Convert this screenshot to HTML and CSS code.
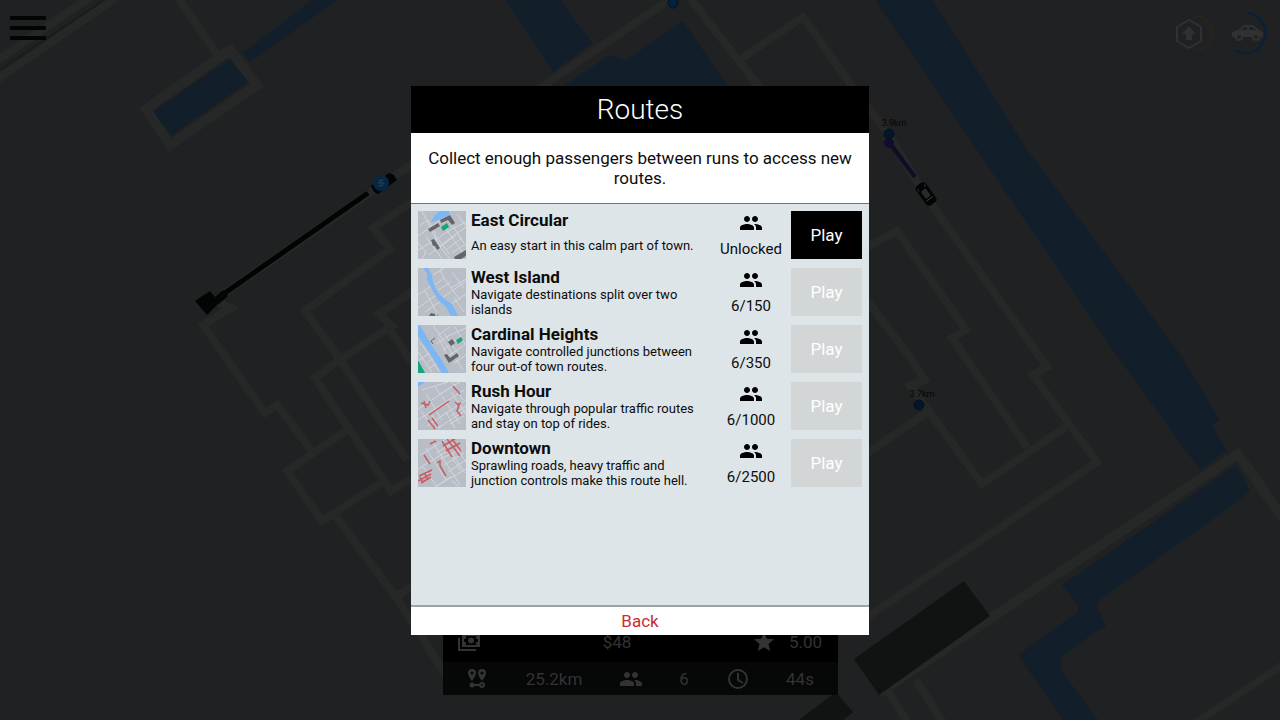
FILE: index.html
```html
<!doctype html>
<html lang="en">
<head>
<meta charset="utf-8">
<meta name="viewport" content="width=device-width, initial-scale=1.0">
<link rel="stylesheet" href="styles.css">
<title>Routes</title>
</head>
<body>

<!-- shared symbols -->
<svg class="defs" aria-hidden="true">
  <symbol id="people" viewBox="0 0 24 24">
    <path d="M16 11c1.66 0 2.99-1.34 2.99-3S17.66 5 16 5s-3 1.34-3 3 1.34 3 3 3zm-8 0c1.66 0 2.99-1.34 2.99-3S9.66 5 8 5 5 6.340 5 8s1.340 3 3 3zm0 2c-2.330 0-7 1.170-7 3.500V19h14v-2.500c0-2.330-4.670-3.500-7-3.500zm8 0c-.29 0-.62.02-.97.05 1.160.84 1.970 1.970 1.970 3.450V19h6v-2.500c0-2.330-4.670-3.500-7-3.500z"/>
  </symbol>
</svg>

<svg class="map" viewBox="0 0 1280 720" preserveAspectRatio="xMidYMid slice" aria-hidden="true">
  <g class="water">
    <path d="M243 53L312 0h25L250 62z"/>
    <path d="M152 112L230 59l18 23-76 53z"/>
    <path d="M506 0h54l32 43-39 29z"/>
    <path d="M560 88l50-33 15 6 58-40 46 67z"/>
    <path d="M875 0h58l92 147 115 153 44 60 36 60-8 6 15 24-27 20-80-110z"/>
    <path d="M1236 465l14 26-10 9-140 100-3 6 9 21-11 5-33 25-2 12 38 51h-35l-45-65 60-43v-7l-16-20z"/>
  </g>
  <g class="roads">
    <path d="M-5 62L92-4M-5 81L120-5"/>
    <path d="M178-2l39 56"/>
    <path class="wide" d="M146 109L230 50l27 35-87 60z"/>
    <path d="M222 295L415 162M213 300l18 8-28 17 62 88 12-8 35 46"/>
    <path d="M415 200l-42 28 17 21-85 62 37 51 65 98M415 290l-36 24 13 12-50 32-27 20 76 113 20-12M388 327l27 40"/>
    <path d="M350 428l-63 43 35 50 63-41M335 515l63 85 48 75M395 597l20-12"/>
    <path d="M540 88L672-2M690-2l70 90M742 58l61-41 48 68 38 50 36 60 117 165 5 7-14 8 64 87-234 158"/>
    <path d="M862 250l35-19 69 99-14 8 75 109M862 294l50 66 13 20-15 6 19 25 53 73 84-57M929 411l-70 48"/>
    <path class="wide" d="M1284 520l-46-66-358 238"/>
    <path d="M887 690l22 34M916 680l28 44M1284 664l-90 60"/>
  </g>
  <path class="rail" d="M-2 71L104 0"/>
  <g class="blocks">
    <path d="M854 659l110-78 26 35-111 79z"/>
    <path d="M836 692l17 20-12 10h-45z"/>
  </g>
  <g class="trip">
    <path class="leg" d="M222 295L368 193"/>
    <path d="M195 301l15-10 5 6 8-7 5 6-8 7-3 2-1 1-9 9z"/>
    <path class="cab" d="M371 186l18-13 5 2 3 5-19 14-4-2z"/>
    <circle class="badge" cx="381" cy="183" r="8"/>
    <path class="mark" d="M378 183h6M379 181l4-1M379 186l4-1"/>
  </g>
  <g class="trip">
    <path class="leg next" d="M889 142l26 35"/>
    <circle class="goal" cx="889" cy="143" r="5"/>
    <circle class="stop" cx="889" cy="134" r="5"/>
    <g transform="translate(926 194) rotate(54)">
      <rect x="-12" y="-6" width="24" height="12" rx="4"/>
      <rect class="roof" x="-5" y="-3" width="9" height="6" rx="1"/>
      <path class="glass" d="M-9-4h3M-9 4h3M6-4v8"/>
    </g>
  </g>
  <circle class="stop" cx="919" cy="405" r="5"/>
  <circle class="stop bright" cx="673" cy="3" r="5"/>
  <text class="distance" x="894" y="126">3.9km</text>
  <text class="distance" x="922" y="397">3.7km</text>
</svg>

<header class="topbar">
  <button class="menu" type="button" aria-label="Menu"><span></span><span></span><span></span></button>
  <div class="gauges">
    <svg width="44" height="44" viewBox="0 0 44 44" aria-hidden="true">
      <path class="ring gold" d="M25 6a17 17 0 0 1 0 34"/>
      <path class="hex" d="M19 10l12 7v14l-12 7-12-7V17z"/>
      <path class="solid" d="M19 16l7 8h-4v6h-6v-6h-4z"/>
    </svg>
    <svg width="44" height="44" viewBox="0 0 44 44" aria-hidden="true">
      <path class="ring blue" d="M21 3a20 20 0 1 1-12 37"/>
      <path class="solid" d="M6 22l6-2 5-5h10l6 5 4 2v5h-3a4 4 0 0 1-8 0h-9a4 4 0 0 1-8 0H6z"/>
      <path class="window" d="M15 20l3-3h3v3zM23 17h3l4 3h-7z"/>
      <circle class="window" cx="13" cy="27" r="2"/><circle class="window" cx="30" cy="27" r="2"/>
    </svg>
  </div>
</header>

<section class="hud" aria-label="Run statistics">
  <div class="hud-row cash">
    <svg width="24" height="24" viewBox="0 0 24 24" aria-hidden="true">
      <path class="outline" d="M6 5h16v11H6zM2 8v12h17M6 8h2V5M20 5v3h2M6 13h2v3M20 16v-3h2"/>
      <circle cx="14" cy="10.500" r="3"/>
    </svg>
    <span>$48</span>
    <svg width="24" height="24" viewBox="0 0 24 24" aria-hidden="true">
      <path d="M12 17.270L18.180 21l-1.640-7.030L22 9.240l-7.190-.61L12 2 9.190 8.630 2 9.240l5.460 4.730L5.820 21z"/>
    </svg>
    <span>5.00</span>
  </div>
  <div class="hud-row totals">
    <svg width="24" height="24" viewBox="0 0 24 24" aria-hidden="true">
      <path fill-rule="evenodd" d="M7 2a4 4 0 0 0-4 4c0 3 4 8 4 8s4-5 4-8a4 4 0 0 0-4-4zm0 2.500a1.500 1.500 0 1 1 0 3 1.500 1.500 0 0 1 0-3zM17 2a4 4 0 0 0-4 4c0 3 4 8 4 8s4-5 4-8a4 4 0 0 0-4-4zm0 2.500a1.500 1.500 0 1 1 0 3 1.500 1.500 0 0 1 0-3z"/>
      <path class="outline" d="M7 18h8"/><circle cx="7" cy="18" r="2.500"/><circle class="outline" cx="17" cy="18" r="2"/>
    </svg>
    <span>25.2km</span>
    <svg width="24" height="24" aria-hidden="true"><use href="#people"/></svg>
    <span>6</span>
    <svg width="24" height="24" viewBox="0 0 24 24" aria-hidden="true">
      <circle class="outline" cx="12" cy="12" r="9"/><path class="outline" d="M12 6v7l5 3"/>
    </svg>
    <span>44s</span>
  </div>
</section>

<main class="overlay">
  <div class="dialog" role="dialog" aria-labelledby="dialog-title">
    <h1 id="dialog-title">Routes</h1>
    <p class="intro">Collect enough passengers between runs to access new routes.</p>

    <ul class="routes">
      <li class="route">
        <svg class="thumb" viewBox="0 0 48 48" aria-hidden="true">
          <path class="street" d="M0 25l20-14 10-3 18 27M4 0l18 36 10 12M0 39l14-8 20-13 14-7M11 44l20-16 17-12M8 26l16 22M17 24l15 20M28 18l17 24M2 14l8-5 8 14M22 36l16-12M29 38l15-11M34 42l12-8M0 32l8 9-4 7M39 3l9 12"/>
          <path class="river" d="M13 11L17 4l5-4h9v4l-11 5z"/>
          <path class="house" d="M10 18l10-6 2 3-10 6zM22 9l10-5 5 8-3 2-4-5-7 3zM13 29l3-1 6 9-3 2-2-4-2 0zM36 46l12-7v6l-5 3h-6z"/>
          <path class="park" d="M23 16l6-4 2 4-6 4z"/>
        </svg>
        <div class="about"><h2>East Circular</h2><p>An easy start in this calm part of town.</p></div>
        <div class="need"><svg width="24" height="24" aria-hidden="true"><use href="#people"/></svg><span>Unlocked</span></div>
        <button class="play" type="button">Play</button>
      </li>
      <li class="route">
        <svg class="thumb" viewBox="0 0 48 48" aria-hidden="true">
          <path class="street" d="M0 27l13-9M17 17l9-7 7 10 15-9M26 10l-4-8 4-2M20 22l13-8M33 20l9 12M24 30l24-17M0 40l18-13 5 6-16 11M7 23l12 22M34 4l12 16M15 7l11-7M30 38l18-12M36 30l10 14"/>
          <path class="river" d="M5 0h5l4 7 1 7 5 11 8 7 6 4 6 12h-7l-5-9-8-7-5-9-6-11V5z"/>
          <path class="house" d="M11 48l2-3 4 1v2z"/><path class="park" d="M18 48l2-1v1z"/>
        </svg>
        <div class="about"><h2>West Island</h2><p>Navigate destinations split over two islands</p></div>
        <div class="need"><svg width="24" height="24" aria-hidden="true"><use href="#people"/></svg><span>6/150</span></div>
        <button class="play" type="button" disabled>Play</button>
      </li>
      <li class="route">
        <svg class="thumb" viewBox="0 0 48 48" aria-hidden="true">
          <path class="street" d="M15 0l30 45M3 18l18 28M0 27l14 20M7 31l10-6M10 37l11-7M12 43l12-8M20 10l12-8M18 19l12-8 18-8M25 25l16-12M30 31l18-12M36 38l12-8M26 8l16 24M20 12l9 17M37 2l10 17M0 36l8-5"/>
          <path class="river" d="M0 0l3 2 11 19 9 13 8 14h-7L11 27 0 11z"/>
          <path class="house" d="M30 17l4-3 3 4-4 3zM26 30l3-1 3 4 7-5 2 3-10 7z"/>
          <path class="smudge" d="M13 16l2 3M13 16l4-3"/>
          <path class="park" d="M38 15l5-3 2 3-5 4zM0 35l7 13H0z"/>
        </svg>
        <div class="about"><h2>Cardinal Heights</h2><p>Navigate controlled junctions between four out-of town routes.</p></div>
        <div class="need"><svg width="24" height="24" aria-hidden="true"><use href="#people"/></svg><span>6/350</span></div>
        <button class="play" type="button" disabled>Play</button>
      </li>
      <li class="route">
        <svg class="thumb" viewBox="0 0 48 48" aria-hidden="true">
          <path class="street" d="M0 27l38-25M0 38l46-30M9 44l39-26M20 46l28-18M8 12l16 26M4 8l26-8M17 5l5 7 20-12M24 14l18 28M33 10l15 22M3 29l12 17M14 33l8 13M28 30l9 16M33 34l15-10M34 0l11 18M32 42l14-8"/>
          <path class="river" d="M0 0h7L0 5z"/>
          <path class="jam" d="M11 33l20-14M3 21l7 2 2-4M6 19l2 7M35 4l7 8M37 20l4 3-2 6 4 5M39 23l4-2M10 38l7 9M14 36l6 8"/>
        </svg>
        <div class="about"><h2>Rush Hour</h2><p>Navigate through popular traffic routes and stay on top of rides.</p></div>
        <div class="need"><svg width="24" height="24" aria-hidden="true"><use href="#people"/></svg><span>6/1000</span></div>
        <button class="play" type="button" disabled>Play</button>
      </li>
      <li class="route">
        <svg class="thumb" viewBox="0 0 48 48" aria-hidden="true">
          <path class="street" d="M2 16l26-16M0 30l36-22M14 2l28 44M8 9l20 32M18 14l17-10M5 28l14 20M22 20l22-10M26 26l20-12M30 33l18-12M20 46l28-16M34 14l13 20M40 12l8 11M17 48l16-10M27 8l16 24M34 42l6 5"/>
          <path class="jam" d="M12 5l6-3M24 2l10 16M29 0l13 17M34 0l9 12M25 7l12-7M28 12l14-8M6 16l6 9M19 24l3-2 0 5 6 10M1 37l13-6M0 42l13-7M3 44l10-6M2 38l3 6M7 35l3 6"/>
        </svg>
        <div class="about"><h2>Downtown</h2><p>Sprawling roads, heavy traffic and junction controls make this route hell.</p></div>
        <div class="need"><svg width="24" height="24" aria-hidden="true"><use href="#people"/></svg><span>6/2500</span></div>
        <button class="play" type="button" disabled>Play</button>
      </li>
    </ul>

    <button class="back" type="button">Back</button>
  </div>
</main>

</body>
</html>
```
FILE: styles.css
```css
* {
	box-sizing: border-box;
}
html,
body {
	height: 100%;
}
body {
	margin: 0;
	overflow: hidden;
	font-family: Roboto, "Liberation Sans", sans-serif;
	font-size: 15px;
	color: #0c0d0d;
	background-color: #202122;
}
h1,
h2,
p,
ul {
	margin: 0;
	padding: 0;
}
svg {
	display: block;
	flex: none;
}
button {
	border: 0;
	padding: 0;
	font: inherit;
	cursor: pointer;
}
.defs {
	position: absolute;
	width: 0;
	height: 0;
}

/* map behind everything */
.map {
	position: absolute;
	width: 100%;
	height: 100%;
}
.water {
	fill: #121e29;
}
.roads {
	fill: none;
	stroke: #262827;
	stroke-width: 8;
}
.roads .wide {
	stroke-width: 10;
}
.rail {
	stroke: #1b1c1c;
	stroke-width: 2;
}
.blocks {
	fill: #111312;
}
.trip {
	fill: #030404;
}
.leg {
	stroke: #020303;
	stroke-width: 5;
}
.next {
	stroke: #100b27;
	stroke-width: 4;
}
.goal {
	fill: #150b30;
}
.badge {
	fill: #0a2742;
}
.mark {
	fill: none;
	stroke: #35485a;
}
.stop {
	fill: #04172a;
	stroke: #061018;
}
.bright {
	fill: #04213d;
}
.roof {
	fill: #292a2a;
}
.glass {
	fill: none;
	stroke: #333;
}
.distance {
	font-size: 9px;
	text-anchor: middle;
	fill: #050606;
}

/* top controls */
.topbar {
	position: absolute;
	top: 0;
	left: 0;
	right: 0;
	display: flex;
	justify-content: space-between;
	padding: 10px 10px 0 10px;
}
.menu {
	display: flex;
	flex-direction: column;
	justify-content: center;
	gap: 6px;
	width: 36px;
	height: 36px;
	background: none;
}
.menu span {
	height: 4px;
	background-color: #030404;
}
.gauges {
	display: flex;
	gap: 12px;
}
.ring,
.hex {
	fill: none;
	stroke-width: 2;
}
.gold {
	stroke: #29251d;
}
.blue {
	stroke: #08203a;
}
.hex {
	stroke: #303132;
}
.solid {
	fill: #303132;
}
.window {
	fill: #202122;
}

/* run statistics */
.hud {
	position: absolute;
	left: 0;
	right: 0;
	bottom: 25px;
	width: 395px;
	margin: 0 auto;
	font-size: 17px;
	color: #333;
	fill: #333;
	background-color: #000;
}
.hud-row {
	display: grid;
	align-items: center;
	justify-items: center;
	height: 33px;
}
.cash {
	grid-template-columns: 53px 1fr 50px 34px;
	height: 40px;
	padding-right: 15px;
}
.totals {
	grid-template-columns: 69px 1fr 69px 37px 71px 53px;
	padding-right: 11px;
	background-color: #060707;
}
.outline {
	fill: none;
	stroke: #333;
	stroke-width: 2;
}

/* dialog */
.overlay {
	position: relative;
	display: flex;
	justify-content: center;
	height: 100%;
	padding: 86px 0 85px;
}
.dialog {
	display: flex;
	flex-direction: column;
	width: 100%;
	max-width: 458px;
	background-color: #fff;
}
h1 {
	font-size: 28px;
	font-weight: 300;
	line-height: 47px;
	text-align: center;
	color: #fff;
	background-color: #000;
}
.intro {
	padding: 15px;
	font-size: 17px;
	line-height: 20px;
	text-align: center;
	border-bottom: 1px solid #6d7779;
}
.routes {
	display: flex;
	flex-direction: column;
	flex: 1;
	gap: 7px;
	min-height: 0;
	padding: 6px 7px;
	overflow: auto;
	list-style: none;
	background-color: #dee5e9;
	border-bottom: 2px solid #98a5a5;
}
.route {
	display: grid;
	grid-template-columns: 48px 1fr 70px 71px;
	align-items: center;
	gap: 5px;
}
.thumb {
	width: 48px;
	height: 48px;
	background-color: #b8bdc6;
}
.street {
	fill: none;
	stroke: #d3d7dd;
	stroke-width: 1;
}
.river {
	fill: #7bb6f5;
}
.house {
	fill: #626669;
}
.smudge {
	fill: none;
	stroke: #626669;
}
.park {
	fill: #16a578;
}
.jam {
	fill: none;
	stroke: #c85c64;
	stroke-width: 1.5;
}
.about h2 {
	font-size: 17px;
	line-height: 20px;
}
.about p {
	display: flex;
	align-items: center;
	min-height: 30px;
	font-size: 13px;
	line-height: 15px;
}
.need {
	display: flex;
	flex-direction: column;
	align-items: center;
	gap: 4px;
	line-height: 20px;
}
.play {
	height: 48px;
	font-size: 17px;
	color: #fff;
	background-color: #000;
}
.play:disabled {
	color: #fff;
	background-color: #d3d6d7;
	cursor: default;
}
.back {
	height: 28px;
	font-size: 17px;
	color: #c62f32;
	background-color: #fff;
}
```
